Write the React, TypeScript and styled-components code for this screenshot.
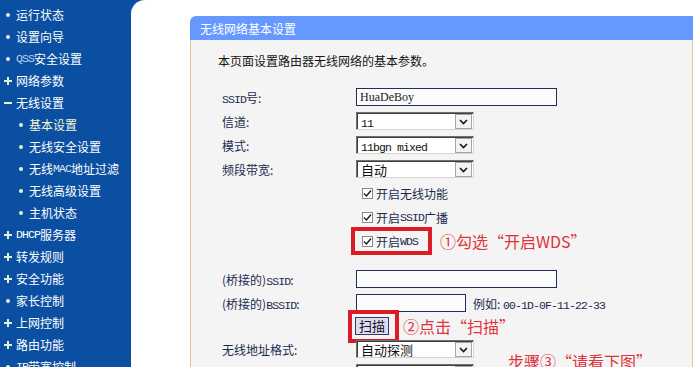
import React from "react";
import styled, { createGlobalStyle } from "styled-components";

const Global = createGlobalStyle`
  html, body { margin: 0; padding: 0; background: #fff; overflow: hidden; }
  body { font-family: "Noto Sans CJK SC", "Noto Sans", sans-serif; }
  * { box-sizing: border-box; }
`;

const Page = styled.div`
  display: flex;
  width: 698px;
  height: 367px;
  background: #0b4fa2;
  overflow: hidden;
`;

const Sidebar = styled.nav`
  width: 131px;
  flex: none;
  padding-top: 4px;
`;

const NavItem = styled.div<{ $sub?: boolean; $active?: boolean }>`
  display: flex;
  align-items: center;
  height: 22px;
  padding-left: ${(p) => (p.$sub ? 16 : 3)}px;
  color: ${(p) => (p.$active ? "#f6f7cf" : "#ffffff")};
  font-size: 12px;
  line-height: 22px;
  white-space: nowrap;
`;

const Marker = styled.span<{ $kind: "dot" | "plus" | "minus" }>`
  position: relative;
  width: 10px;
  height: 10px;
  margin-right: 3px;
  flex: none;
  &::before {
    content: "";
    position: absolute;
    background: #e4f1d4;
    ${(p) =>
      p.$kind === "dot"
        ? "left:3px;top:3px;width:4px;height:4px;border-radius:50%;"
        : "left:1px;top:4px;width:8px;height:2px;"}
  }
  &::after {
    content: "";
    position: absolute;
    background: #e4f1d4;
    ${(p) => (p.$kind === "plus" ? "left:4px;top:1px;width:2px;height:8px;" : "display:none;")}
  }
`;

const Latin = styled.span<{ $tint?: string }>`
  font-family: "Liberation Mono", "DejaVu Sans Mono", monospace;
  font-size: 11.5px;
  letter-spacing: -0.9px;
  color: ${(p) => p.$tint || "inherit"};
`;

const Main = styled.main`
  flex: 1;
  min-width: 0;
  background: #fff;
  border-top-left-radius: 14px;
  padding: 16px 4px 0 59px;
`;

const Panel = styled.section`
  width: 503px;
`;

const PanelHeader = styled.div`
  height: 24px;
  background: #6699ff;
  border-top-left-radius: 6px;
  color: #fff;
  font-size: 12px;
  display: flex;
  align-items: center;
  padding-left: 10px;
`;

const PanelBody = styled.div`
  background: #f4f4f4;
  border-left: 1px solid #e3c391;
  border-right: 1px solid #e3c391;
  padding: 14px 0 0 27px;
  height: 360px;
`;

const Intro = styled.p`
  margin: 0;
  font-size: 12px;
  line-height: 14px;
  color: #161616;
`;

const Form = styled.div`
  margin: 17px 0 0 4px;
  display: flex;
  flex-direction: column;
`;

const Row = styled.div<{ $h?: number; $gap?: number }>`
  display: flex;
  align-items: center;
  height: ${(p) => p.$h ?? 24}px;
  margin-top: ${(p) => p.$gap ?? 0}px;
`;

const Label = styled.div`
  width: 134px;
  flex: none;
  font-size: 12px;
  color: #1c2b4c;
  white-space: nowrap;
`;

const TextInput = styled.div<{ $w: number }>`
  width: ${(p) => p.$w}px;
  height: 18px;
  border: 1px solid #1d2f55;
  background: #fcfcfc;
  display: flex;
  align-items: center;
  padding-left: 3px;
  color: #1a1a1a;
  font-family: "Liberation Serif", serif;
  font-size: 12px;
`;

const Select = styled.div`
  width: 118px;
  height: 18px;
  flex: none;
  display: flex;
  align-items: center;
  justify-content: space-between;
  background: #fff;
  border: 1px solid;
  border-color: #707070 #d4d4d4 #d4d4d4 #707070;
  box-shadow: inset 1px 1px 0 #3e3e3e;
  padding: 1px 1px 0 4px;
  font-size: 13px;
  color: #111;
`;

const SelectArrow = styled.span`
  width: 17px;
  height: 15px;
  background: #f3f3f3;
  border: 1px solid #a6a6a6;
  display: flex;
  align-items: center;
  justify-content: center;
`;

const CheckRow = styled.div`
  display: inline-flex;
  align-items: center;
  font-size: 12px;
  color: #1c2b4c;
  white-space: nowrap;
`;

const Box = styled.span`
  width: 11px;
  height: 11px;
  border: 1px solid #8a8a8a;
  background: #fff;
  margin-right: 3px;
  display: flex;
  align-items: center;
  justify-content: center;
`;

const Indent = styled.div`
  padding-left: 6px;
  display: flex;
  align-items: center;
`;

const RedFrame = styled.div<{ $w: number; $h: number; $shift: number; $pl: number }>`
  width: ${(p) => p.$w}px;
  height: ${(p) => p.$h}px;
  margin-left: ${(p) => p.$shift}px;
  border: 4px solid #dc1c24;
  padding-left: ${(p) => p.$pl}px;
  display: flex;
  align-items: center;
  flex: none;
`;

const Note = styled.span<{ $ml: number; $dy?: number }>`
  margin-left: ${(p) => p.$ml}px;
  position: relative;
  top: ${(p) => p.$dy ?? 0}px;
  color: #e0323a;
  font-size: 16px;
  white-space: nowrap;
`;

const ScanButton = styled.button`
  width: 34px;
  height: 18px;
  padding: 0;
  background: #dcdcf4;
  border: 1px solid #3a3a5a;
  font-family: "Noto Sans CJK SC", sans-serif;
  font-size: 13px;
  line-height: 16px;
  color: #111;
`;

const Hint = styled.span`
  margin-left: 7px;
  font-size: 12px;
  color: #1c2b4c;
  white-space: nowrap;
`;

const Chevron = () => (
  <svg width="9" height="6" viewBox="0 0 9 6">
    <polyline points="1,1 4.5,4.5 8,1" fill="none" stroke="#1a1a1a" strokeWidth="1.7" />
  </svg>
);

const Tick = () => (
  <svg width="9" height="9" viewBox="0 0 9 9">
    <polyline points="1,4.5 3.5,7 8,1.5" fill="none" stroke="#222" strokeWidth="1.5" />
  </svg>
);

type NavDef = { kind: "dot" | "plus" | "minus"; label: React.ReactNode; sub?: boolean; active?: boolean };

const nav: NavDef[] = [
  { kind: "dot", label: "运行状态" },
  { kind: "dot", label: "设置向导" },
  { kind: "dot", label: <><Latin $tint="#b9d4f4">QSS</Latin>安全设置</> },
  { kind: "plus", label: "网络参数" },
  { kind: "minus", label: "无线设置" },
  { kind: "dot", label: "基本设置", sub: true, active: true },
  { kind: "dot", label: "无线安全设置", sub: true },
  { kind: "dot", label: <>无线<Latin $tint="#dfe8f6">MAC</Latin>地址过滤</>, sub: true },
  { kind: "dot", label: "无线高级设置", sub: true },
  { kind: "dot", label: "主机状态", sub: true },
  { kind: "plus", label: <><Latin>DHCP</Latin>服务器</> },
  { kind: "plus", label: "转发规则" },
  { kind: "plus", label: "安全功能" },
  { kind: "dot", label: "家长控制" },
  { kind: "plus", label: "上网控制" },
  { kind: "plus", label: "路由功能" },
  { kind: "dot", label: <><Latin>IP</Latin>带宽控制</> },
];

const SelectBox = ({ children }: { children: React.ReactNode }) => (
  <Select>
    <span>{children}</span>
    <SelectArrow>
      <Chevron />
    </SelectArrow>
  </Select>
);

const Check = ({ children }: { children: React.ReactNode }) => (
  <CheckRow>
    <Box>
      <Tick />
    </Box>
    {children}
  </CheckRow>
);

export default function App() {
  return (
    <>
      <Global />
      <Page>
        <Sidebar>
          {nav.map((n, i) => (
            <NavItem key={i} $sub={n.sub} $active={n.active}>
              <Marker $kind={n.kind} />
              {n.label}
            </NavItem>
          ))}
        </Sidebar>
        <Main>
          <Panel>
            <PanelHeader>无线网络基本设置</PanelHeader>
            <PanelBody>
              <Intro>本页面设置路由器无线网络的基本参数。</Intro>
              <Form>
                <Row>
                  <Label><Latin>SSID</Latin>号:</Label>
                  <TextInput $w={201}>HuaDeBoy</TextInput>
                </Row>
                <Row>
                  <Label>信道:</Label>
                  <SelectBox><Latin>11</Latin></SelectBox>
                </Row>
                <Row>
                  <Label>模式:</Label>
                  <SelectBox><Latin>11bgn mixed</Latin></SelectBox>
                </Row>
                <Row>
                  <Label>频段带宽:</Label>
                  <SelectBox>自动</SelectBox>
                </Row>
                <Row>
                  <Label />
                  <Indent><Check>开启无线功能</Check></Indent>
                </Row>
                <Row>
                  <Label />
                  <Indent><Check>开启<Latin>SSID</Latin>广播</Check></Indent>
                </Row>
                <Row>
                  <Label />
                  <RedFrame $w={81} $h={28} $shift={-5} $pl={7}>
                    <Check>开启<Latin>WDS</Latin></Check>
                  </RedFrame>
                  <Note $ml={8}>①勾选“开启WDS”</Note>
                </Row>
                <Row $gap={14}>
                  <Label>(桥接的)<Latin>SSID</Latin>:</Label>
                  <TextInput $w={201} />
                </Row>
                <Row>
                  <Label>(桥接的)<Latin>BSSID</Latin>:</Label>
                  <TextInput $w={110} />
                  <Hint>例如: <Latin>00-1D-0F-11-22-33</Latin></Hint>
                </Row>
                <Row $h={22}>
                  <Label />
                  <RedFrame $w={51} $h={33} $shift={-8} $pl={3}>
                    <ScanButton>扫描</ScanButton>
                  </RedFrame>
                  <Note $ml={4}>②点击“扫描”</Note>
                </Row>
                <Row>
                  <Label>无线地址格式:</Label>
                  <SelectBox>自动探测</SelectBox>
                  <Note $ml={34} $dy={12}>步骤③“请看下图”</Note>
                </Row>
                <Row>
                  <Label>密钥类型:</Label>
                  <SelectBox>无加密</SelectBox>
                </Row>
              </Form>
            </PanelBody>
          </Panel>
        </Main>
      </Page>
    </>
  );
}
